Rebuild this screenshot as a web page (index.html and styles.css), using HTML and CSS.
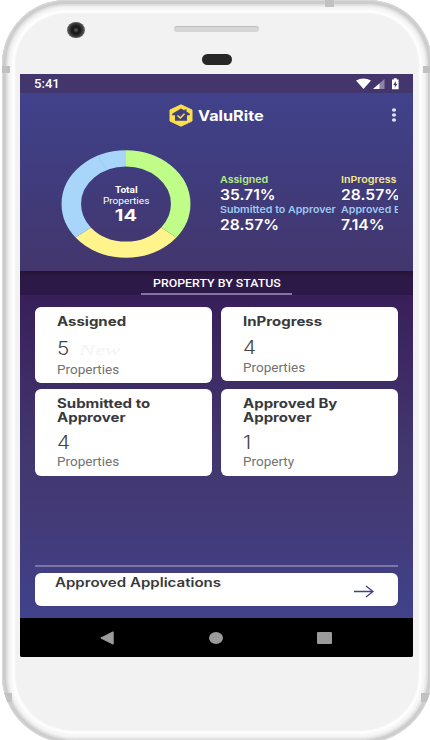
FILE: index.html
```html
<!DOCTYPE html>
<html lang="en">
<head>
<meta charset="utf-8">
<title>ValuRite</title>
<link rel="stylesheet" href="styles.css">
</head>
<body>
<div class="phone">
  <i class="band band-top"></i><i class="band band-left"></i><i class="band band-right"></i><i class="band band-bl"></i><i class="band band-br"></i>
  <div class="bezel">
    <i class="camera"></i><i class="speaker"></i><i class="sensor"></i>
  </div>
  <main class="screen">
    <div class="statusbar">
      <span class="t clock">5:41</span>
      <svg class="status-icons" width="44" height="12" viewBox="0 0 44 12">
        <path d="M0 2.600Q7.500-1.700 15 2.600L7.500 11Z" fill="#fff"/>
        <path d="M17 11L28.500 1V11Z" fill="#8d83a5"/><path d="M17 11L23.500 5.400V11Z" fill="#fff"/>
        <path d="M36 1.500h1.800V.3h3v1.200h1.800V11.300H36Z" fill="#fff"/><path d="M39.800 3L37.300 6.900h1.500v2.900l2.500-4.100h-1.500Z" fill="#43366e"/>
      </svg>
    </div>
    <header class="hero">
      <div class="appbar">
        <svg class="logo" width="24" height="23" viewBox="0 0 24 23">
          <path d="M12 .8L23 6v11L12 22.200 1 17V6Z" fill="#fbdf4b" stroke="#fbdf4b" stroke-width="1" stroke-linejoin="round"/>
          <path d="M12 4.500L15.500 6.400V5.500h2v2.100L20.800 9.700v1.500H18v5.600H6v-5.600H3.200V9.700Z" fill="#40407f"/>
          <path d="M8.500 11.500l2.800 2.500 4.200-4.200" fill="none" stroke="#fbdf4b" stroke-width="1.600"/>
        </svg>
        <span class="t brand">ValuRite</span>
        <svg class="more" width="6" height="14" viewBox="0 0 6 14" fill="#e3e1f1"><ellipse cx="3" cy="2" rx="2.100" ry="1.700"/><ellipse cx="3" cy="7" rx="2.100" ry="1.700"/><ellipse cx="3" cy="12" rx="2.100" ry="1.700"/></svg>
      </div>
      <div class="summary">
        <div class="donut">
          <svg class="ring" width="130" height="108" viewBox="-65 -54 130 108">
            <g transform="scale(1 .835)" fill="none" stroke-width="19.500">
              <circle r="54.700" stroke="#fff48b" pathLength="14" stroke-dasharray="4 10" stroke-dashoffset="-5" transform="rotate(-90)"/>
              <circle r="54.700" stroke="#bffd88" pathLength="14" stroke-dasharray="5 9" transform="rotate(-90)"/>
              <circle r="54.700" stroke="#a8d6fa" pathLength="14" stroke-dasharray="5 9" stroke-dashoffset="-9" transform="rotate(-90)"/>
              <path d="M-19.600-40.700L-28-58" stroke="#93bfe7" stroke-width=".5"/>
            </g>
          </svg>
          <div class="total">
            <span class="t total-name">Total</span>
            <span class="t total-unit">Properties</span>
            <span class="t total-num">14</span>
          </div>
        </div>
        <div class="legend">
          <div class="legend-col">
            <span class="t name green">Assigned</span><span class="t pct">35.71%</span>
            <span class="t name blue">Submitted to Approver</span><span class="t pct">28.57%</span>
          </div>
          <div class="legend-col">
            <span class="t name yellow">InProgress</span><span class="t pct">28.57%</span>
            <span class="t name blue">Approved By</span><span class="t pct">7.14%</span>
          </div>
        </div>
      </div>
    </header>
    <div class="tabs"><div class="tab"><span class="t">PROPERTY BY STATUS</span></div></div>
    <section class="content">
      <div class="cards">
        <article class="card">
          <h2 class="t">Assigned</h2>
          <div class="count"><span class="t num">5</span><span class="t new">New</span></div>
          <span class="t unit">Properties</span>
        </article>
        <article class="card short">
          <h2 class="t">InProgress</h2>
          <div class="count"><span class="t num">4</span></div>
          <span class="t unit">Properties</span>
        </article>
        <article class="card tall">
          <h2 class="t">Submitted to<br>Approver</h2>
          <div class="count"><span class="t num">4</span></div>
          <span class="t unit">Properties</span>
        </article>
        <article class="card tall">
          <h2 class="t">Approved By<br>Approver</h2>
          <div class="count"><span class="t num">1</span></div>
          <span class="t unit">Property</span>
        </article>
      </div>
      <div class="bottom">
        <div class="approved">
          <span class="t">Approved Applications</span>
          <svg class="arrow" width="22" height="13" viewBox="0 0 22 13" fill="none" stroke="#40408a" stroke-width="1.300"><path d="M1 6.500h19M13 1l7 5.500-7 5.500"/></svg>
        </div>
      </div>
    </section>
    <nav class="navbar">
      <svg width="14" height="14" viewBox="0 0 14 14"><path d="M.8 7L13.200.8v12.400Z" fill="#9b9b9b" stroke="#9b9b9b" stroke-width="1" stroke-linejoin="round"/></svg>
      <svg width="14" height="12" viewBox="0 0 14 12"><ellipse cx="7" cy="6" rx="7" ry="6" fill="#9b9b9b"/></svg>
      <svg width="15" height="12" viewBox="0 0 15 12"><rect width="15" height="12" rx="1" fill="#9b9b9b"/></svg>
    </nav>
  </main>
</div>
</body>
</html>
```
FILE: styles.css
```css
* { box-sizing: border-box; }
html, body { margin: 0; height: 740px; overflow: hidden; background: #fff; }
body { font-family: Inter, "Liberation Sans", sans-serif; }

.phone {
  position: relative; width: 430px; height: 744px; margin-left: 2px;
  padding: 0 19px 0 18px; border-radius: 64px 64px 72px 72px / 64px 64px 68px 68px;
  background: #f2f2f2; overflow: hidden;
  box-shadow: inset 0 0 0 1px #d9d9d9, inset 0 0 0 4px #cdcdcd, inset 0 0 2px 6px #dedede, inset 0 0 3px 10px #f5f5f5, inset 0 0 2px 13px #fff;
}
.band { position: absolute; background: #c1c1c1; }
.band-top { left: 323px; top: 0; width: 9px; height: 7px; }
.band-left { left: 0; top: 66px; width: 8px; height: 7px; }
.band-right { right: 0; top: 66px; width: 9px; height: 7px; }
.band-bl { left: 0; top: 693px; width: 10px; height: 9px; }
.band-br { right: 0; top: 693px; width: 11px; height: 9px; }

.t { display: block; width: max-content; white-space: nowrap; transform: scaleX(var(--sx, 1.12)); transform-origin: 0 0; }

.bezel { position: relative; height: 74px; }
.camera { position: absolute; left: 47px; top: 22px; width: 18px; height: 16px; border-radius: 50%; background: radial-gradient(circle, #4b4e45 0 1px, #161616 3px, #222 5px, #444 7px, #686868 9px); }
.speaker { position: absolute; left: 154px; top: 26px; width: 85px; height: 6px; border-radius: 3px; background: #d6d6d6; border-top: 1px solid #bebebe; }
.sensor { position: absolute; left: 182px; top: 54px; width: 30px; height: 11px; border-radius: 6px; background: #272727; }

.screen { width: 393px; height: 583px; display: flex; flex-direction: column; background: #40408a; overflow: hidden; border-radius: 0 0 2px 2px; }
.statusbar { height: 19px; flex: none; display: flex; justify-content: space-between; padding: 0 13px 0 14px; background: #43366c; color: #fff; }
.clock { font: 500 12px/20px Roboto, sans-serif; --sx: 1.09; }
.status-icons { margin: 4px 0 0; }

.hero { height: 178px; flex: none; background: linear-gradient(#40428b, #403c7e 45%, #43366c); color: #fff; }
.appbar { height: 44px; display: flex; align-items: center; padding: 0 16px 0 149px; }
.brand { margin-left: 5px; font-size: 14px; font-weight: 700; line-height: 21px; padding-top: 1px; --sx: 1.16; }
.more { margin-left: auto; }
.summary { display: flex; padding-top: 13px; }
.donut { display: grid; margin-left: 41px; width: 130px; height: 108px; }
.donut > * { grid-area: 1 / 1; }
.total { display: flex; flex-direction: column; align-items: center; padding-top: 34px; }
.total .t { transform-origin: 50% 0; }
.total-name { font: 700 9.2px/11px Roboto, sans-serif; --sx: 1.1; }
.total-unit { font: 400 9.2px/11px Roboto, sans-serif; --sx: 1.1; }
.total-num { font-size: 16px; font-weight: 700; line-height: 19px; --sx: 1.25; }
.legend { display: grid; grid-template-columns: 121px 57px; margin: 23px 0 0 28.500px; width: 178px; overflow: hidden; height: 64px; }
.name { font-size: 9.5px; font-weight: 600; line-height: 13px; --sx: 1.12; }
.pct { font-size: 14px; font-weight: 600; line-height: 17px; --sx: 1.12; }
.green { color: #b5ed87; }
.yellow { color: #f5e98c; }
.blue { color: #9ccaf2; }

.tabs { height: 24px; flex: none; display: flex; justify-content: center; background: linear-gradient(#241334, #2d1947 30%, #2d1947); }
.tab { width: 151px; padding: 0 0 0 12px; border-bottom: 2px solid #8176a3; color: #fff; font: 500 11.5px/24px Roboto, sans-serif; --sx: 1.075; }

.content { flex: 1; display: flex; flex-direction: column; justify-content: space-between; padding: 12px 15px 12px; background: linear-gradient(#381f5a, #42386f 50%, #433a78 70%, #40428b); }
.cards { display: grid; grid-template-columns: 177px 177px; gap: 6px 9px; align-items: start; }
.card { height: 75.500px; padding: 8px 0 0 21.500px; border-radius: 6px; background: #fff; color: #39393b; }
.card h2 { margin: 0; font-size: 12.5px; font-weight: 700; line-height: 14px; --sx: 1.2; }
.count { display: flex; margin: 9px 0 1px; }
.num { font-size: 18px; font-weight: 300; line-height: 22px; --sx: 1.15; color: #444; }
.new { margin-left: 12px; font: italic 700 15px/24px "Liberation Serif", serif; color: #f8f4f5; --sx: 1.5; }
.unit { font: 400 12px/14px Roboto, sans-serif; color: #727272; --sx: 1.125; }
.short { height: 73.500px; }
.short .count { margin: 8px 0 2px; }
.tall { height: 87px; }
.tall .count { margin: 7px 0 1px; }

.bottom { border-top: 2px solid #7d76aa; padding-top: 6px; }
.approved { height: 33px; display: flex; justify-content: space-between; align-items: flex-start; padding: 2px 23px 0 19.500px; border-radius: 6px; background: #fff; color: #39393b; font-size: 12.5px; font-weight: 600; line-height: 15px; --sx: 1.205; }
.arrow { margin-top: 10px; }

.navbar { height: 39px; flex: none; display: flex; justify-content: space-between; align-items: center; padding: 0 81px 0 80px; background: #000; }
```
